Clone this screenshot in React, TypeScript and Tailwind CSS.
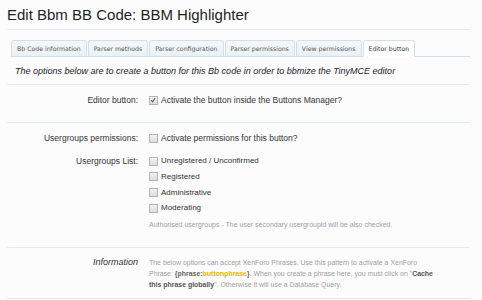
import React from "react";

function Box({ checked = false }: { checked?: boolean }) {
  return (
    <span className="relative inline-block w-[9px] h-[9px] shrink-0 border border-[#b4b4b4] bg-gradient-to-b from-[#f4f4f4] to-[#dcdcdc]">
      {checked && (
        <svg viewBox="0 0 9 9" className="absolute left-0 top-0 w-[7px] h-[7px]">
          <path d="M1.5 4.2 L3.3 6.2 L6.6 1.2" fill="none" stroke="#3c5a8a" strokeWidth="1.3" />
        </svg>
      )}
    </span>
  );
}

const tabs = [
  "Bb Code information",
  "Parser methods",
  "Parser configuration",
  "Parser permissions",
  "View permissions",
  "Editor button",
];

export default function App() {
  return (
    <div className="w-[482px] h-[300px] overflow-hidden bg-[#fcfcfd] text-[#333] font-['Liberation_Sans',sans-serif]">
      <div className="pl-[7px] pr-[12px] pt-[5px]">
        <h1 className="text-[15px] leading-[20px] text-[#1f1f1f] font-['Liberation_Sans',sans-serif] pb-[4px] border-b border-[#e6edf1]">
          Edit Bbm BB Code: BBM Highlighter
        </h1>
      </div>

      <div className="ml-[11px] mr-[12px] mt-[10px] flex items-end border-b border-[#d3dfe7]">
        {tabs.map((t, i) => {
          const active = i === tabs.length - 1;
          return (
            <div
              key={t}
              className={
                active
                  ? "h-[17px] px-[5px] -mb-px flex items-center text-[6.2px] text-[#333] font-['DejaVu_Sans',sans-serif] bg-white border border-[#d3dfe7] border-b-white rounded-t-[3px]"
                  : "h-[16px] px-[5px] mr-px flex items-center text-[6.2px] text-[#555] font-['DejaVu_Sans',sans-serif] bg-gradient-to-b from-[#f5f8fa] to-[#e9f0f4] border border-[#d3dfe7] border-b-0 rounded-t-[3px]"
              }
            >
              {t}
            </div>
          );
        })}
      </div>

      <p className="ml-[15px] mt-[8px] text-[9px] leading-[12px] italic text-[#222]">
        The options below are to create a button for this Bb code in order to bbmize the TinyMCE editor
      </p>

      <div className="mx-[7px] mr-[12px] mt-[7px] border-t border-[#e2ecf0]">
        <div className="grid grid-cols-[131px_1fr] gap-x-[11px] pt-[9px] pb-[16px] text-[8.5px] leading-[12px]">
          <div className="text-right">Editor button:</div>
          <label className="flex items-center gap-[3px]">
            <Box checked />
            <span>Activate the button inside the Buttons Manager?</span>
          </label>
        </div>

        <div className="border-t border-[#e2ecf0] pt-[9px] text-[8.5px] leading-[12px]">
          <div className="grid grid-cols-[131px_1fr] gap-x-[11px]">
            <div className="text-right">Usergroups permissions:</div>
            <label className="flex items-center gap-[3px]">
              <Box />
              <span>Activate permissions for this button?</span>
            </label>
          </div>

          <div className="grid grid-cols-[131px_1fr] gap-x-[11px] mt-[11px]">
            <div className="text-right">Usergroups List:</div>
            <div className="flex flex-col gap-[3.8px]">
              {["Unregistered / Unconfirmed", "Registered", "Administrative", "Moderating"].map((g) => (
                <label key={g} className="flex items-center gap-[3px]">
                  <Box />
                  <span className="text-[8px]">{g}</span>
                </label>
              ))}
              <div className="text-[7px] text-[#a0a0a0] mt-[2px] leading-[10px]">
                Authorised usergroups - The user secondary usergroupid will be also checked.
              </div>
            </div>
          </div>
        </div>

        <div className="mt-[17px] border-t border-[#e2ecf0] pt-[9px] pb-[8px] border-b">
          <div className="grid grid-cols-[131px_1fr] gap-x-[11px]">
            <div className="text-right text-[9px] italic leading-[11px] text-[#333]">Information</div>
            <div className="flex flex-col text-[6.95px] leading-[11px] text-[#a0a0a0] whitespace-nowrap">
              <span>The below options can accept XenForo Phrases. Use this pattern to activate a XenForo</span>
              <span>
                Phrase: <b className="text-[#666]">{"{phrase:"}</b>
                <b className="text-[#f0b400]">buttonphrase</b>
                <b className="text-[#666]">{"}"}</b>. When you create a phrase here, you must click on "
                <b className="text-[#555]">Cache</b>
              </span>
              <span>
                <b className="text-[#555]">this phrase globally</b>". Otherwise it will use a Database Query.
              </span>
            </div>
          </div>
        </div>
      </div>
    </div>
  );
}
